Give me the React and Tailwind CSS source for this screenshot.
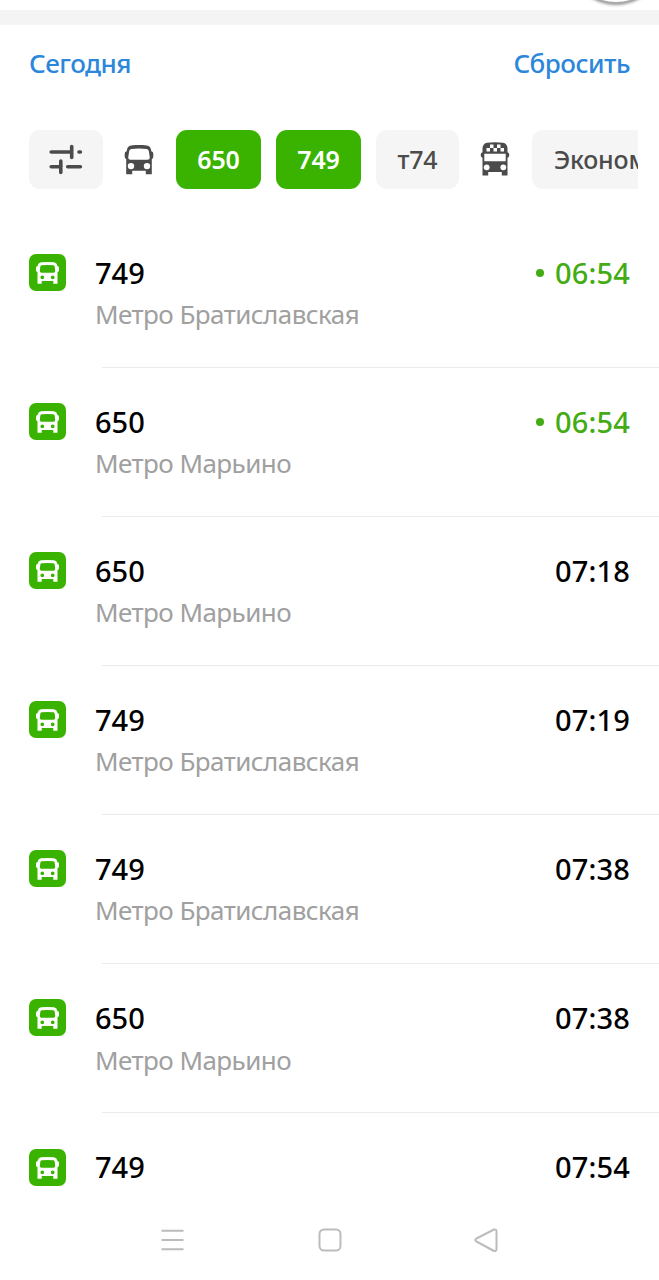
import React from 'react';

const departures = [
  { route: '749', stop: 'Метро Братиславская', time: '06:54', live: true },
  { route: '650', stop: 'Метро Марьино', time: '06:54', live: true },
  { route: '650', stop: 'Метро Марьино', time: '07:18' },
  { route: '749', stop: 'Метро Братиславская', time: '07:19' },
  { route: '749', stop: 'Метро Братиславская', time: '07:38' },
  { route: '650', stop: 'Метро Марьино', time: '07:38' },
  { route: '749', time: '07:54' },
];

const FilterIcon = () => (
  <svg width="34" height="32" viewBox="0 0 34 32" fill="none" stroke="#4b4b4b" strokeWidth="3.6" strokeLinecap="round">
    <path d="M2.2 8H22M22.7 2.500v11M30 8h1.400M2.200 22.700H12M11.800 17v11.500M18.700 22.700h12.700" />
  </svg>
);

const BusIcon = () => (
  <svg width="30" height="30" viewBox="0 0 30 30">
    <path
      fill="#4b4b4b"
      fillRule="evenodd"
      d="M7 .5Q15-.8 23 .5q3.300.6 4 4l.3 1.700q2 .4 2 2.500v3q0 2-1.500 2.300V29.300h-6V25.800H8.200v3.500h-6V14Q.7 13.700.7 11.700v-3q0-2.100 2-2.500L3 4.500q.7-3.400 4-4ZM7.200 4Q5.600 4.300 5.200 6L4.200 12.500Q4.200 14.800 6.500 14.800H23.500Q25.800 14.800 25.800 12.500L24.800 6Q24.400 4.300 22.800 4 15 3.200 7.200 4ZM7 17.900a3.200 3.200 0 1 0 0 6.400 3.200 3.200 0 0 0 0-6.400ZM23 17.900a3.200 3.200 0 1 0 0 6.400 3.200 3.200 0 0 0 0-6.400Z"
    />
  </svg>
);

const MinibusIcon = () => (
  <svg width="30" height="34" viewBox="0 0 30 34">
    <path
      fill="#4b4b4b"
      d="M7 .8Q15-.5 23 .8q4 .7 4.500 5.200v4.200q1.700.3 1.700 2v1.500q0 1.500-1.700 2V33.500h-5.700V30H8.200v3.500H2.500V15.700q-1.700-.5-1.700-2v-1.500q0-1.700 1.700-2V6Q3 1.500 7 .8Z"
    />
    <path
      fill="#fff"
      d="M10 2.500h3.500V6H10ZM17 2.500h3.500V6H17ZM6.500 6H10v3.500H6.500ZM13.500 6H17v3.500h-3.500ZM20.500 6H24v3.500h-3.500ZM4.300 11.800h21.400v7.400H4.300Z"
    />
    <circle cx="6.700" cy="25.300" r="2.900" fill="#fff" />
    <circle cx="23.300" cy="25.300" r="2.900" fill="#fff" />
  </svg>
);

const BusBadge = () => (
  <svg className="block" width="37" height="37" viewBox="0 0 37 37">
    <rect width="37" height="37" rx="7" fill="#39b300" />
    <path
      fill="#fff"
      fillRule="evenodd"
      d="M12 8.300q6.500-.8 13 0 2.700.4 3.200 2.900l.1.800q1.700.2 1.700 2v2q0 1.900-1.500 2.200V29.800H24.300V27H12.700v2.800H8.500V18.200Q7 17.900 7 16v-2Q7 12.200 8.700 12l.1-.8q.5-2.500 3.200-2.900ZM12.500 11.300Q11.500 11.500 11.300 12.700L10.800 17Q10.800 18.800 12.500 18.800H24.500Q26.200 18.800 26.200 17L25.700 12.700Q25.500 11.500 24.500 11.300 18.500 10.800 12.500 11.300ZM13.300 21.400a1.900 1.900 0 1 0 0 3.800 1.900 1.900 0 0 0 0-3.800ZM23.700 21.400a1.900 1.900 0 1 0 0 3.800 1.900 1.900 0 0 0 0-3.800Z"
    />
  </svg>
);

const Departure = ({ item }) => (
  <li className="flex shrink-0 pl-[29px]">
    <div className="pt-[35.4px]">
      <BusBadge />
    </div>
    <div className="ml-[29px] min-w-0 flex-1">
      <div className="flex h-[74px] items-end justify-between pr-[29px] text-[29px] leading-[40px] font-medium">
        <span className="text-black">{item.route}</span>
        <span className={item.live ? 'flex items-center tracking-[0.15px] text-[#43ab14]' : 'flex items-center tracking-[0.15px] text-black'}>
          {item.live && <i className="mr-[11px] size-2 rounded-full bg-[#43ab14]" />}
          {item.time}
        </span>
      </div>
      {item.stop && (
        <>
          <p className="h-[74.1px] pt-[4.5px] text-[26px] leading-[34px] tracking-[-0.56px] text-[#a0a0a0]">{item.stop}</p>
          <div className="ml-[7px] h-px bg-[#ebebeb]" />
        </>
      )}
    </div>
  </li>
);

const App = () => {
  return (
    <div className="relative flex h-[1280px] w-[659px] flex-col overflow-hidden bg-white font-['Noto_Sans',sans-serif]">
      <div className="h-[10px] shrink-0" />
      <div className="h-[14.5px] shrink-0 bg-[#f4f4f4]" />
      {/* floating map button peeking in from above */}
      <div className="absolute -top-[92px] left-[568px] size-[96px] rounded-full border-[2px] border-[#aaa] bg-white shadow-[0_1px_3px_#999]" />

      <header className="flex h-[105.5px] shrink-0 justify-between px-[29px] pt-[20px] text-[26px] leading-[36px] font-medium tracking-[-0.5px] text-[#2c87db]">
        <span>Сегодня</span>
        <span>Сбросить</span>
      </header>

      <div className="mr-[21px] ml-[29px] flex h-[59px] shrink-0 items-center overflow-hidden text-[25px] font-medium tracking-[-0.2px] text-[#4b4b4b]">
        <div className="flex h-full w-[74px] shrink-0 items-center justify-center rounded-[11px] bg-[#f5f5f5]">
          <FilterIcon />
        </div>
        <div className="flex w-[73px] shrink-0 justify-center pr-[1px]">
          <BusIcon />
        </div>
        <div className="mr-[15px] flex h-full w-[85px] shrink-0 items-center justify-center rounded-[11px] bg-[#39b300] font-semibold text-white">650</div>
        <div className="mr-[15px] flex h-full w-[85px] shrink-0 items-center justify-center rounded-[11px] bg-[#39b300] font-semibold text-white">749</div>
        <div className="flex h-full w-[83px] shrink-0 items-center justify-center rounded-[11px] bg-[#f5f5f5]">т74</div>
        <div className="flex w-[73px] shrink-0 justify-center pr-[2px] pb-[1px]">
          <MinibusIcon />
        </div>
        <div className="flex h-full w-[150px] shrink-0 items-center rounded-[11px] bg-[#f5f5f5] pl-[22px]">Эконом</div>
      </div>

      <ul className="flex shrink-0 flex-col pt-[29.6px]">
        {departures.map((item, index) => (
          <Departure key={index} item={item} />
        ))}
      </ul>

      <nav className="mt-auto h-[80px] shrink-0">
        <svg className="block" width="659" height="80" viewBox="0 0 659 80" fill="none" stroke="#bcbcbc" strokeWidth="2" strokeLinejoin="round">
          <path d="M161.500 30.700h22M161.500 40h22M161.500 49.300h22" />
          <rect x="319.500" y="29.500" width="21" height="21" rx="4.500" />
          <path d="M494 29.500 476.500 38.500Q474 40 476.500 41.500L494 51Q496.500 51.500 496.500 49V31.500Q496.500 29 494 29.500Z" />
        </svg>
      </nav>
    </div>
  );
};

export default App;
